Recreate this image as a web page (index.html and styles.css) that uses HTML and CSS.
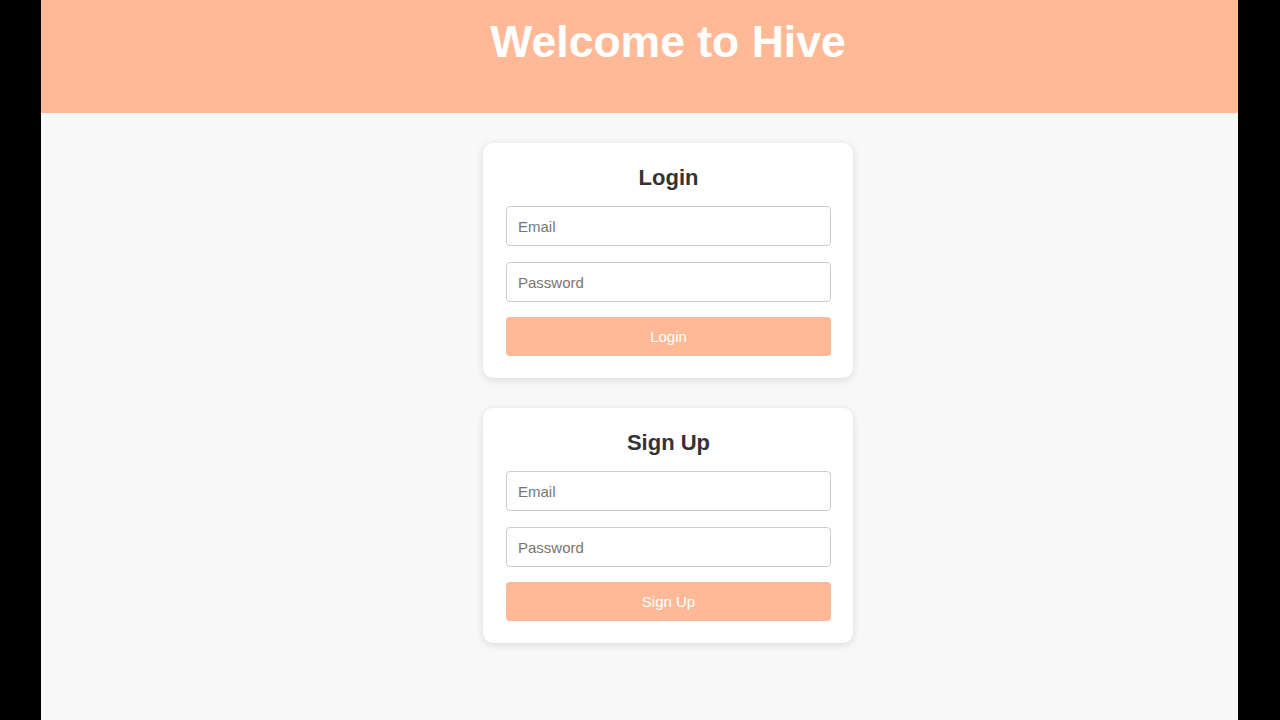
FILE: index.html
```html
<!DOCTYPE html>
<html lang="en">
<head>
<meta charset="utf-8">
<title>Hive</title>
<link rel="stylesheet" href="styles.css">
</head>
<body>
<div class="page">
  <header class="header">
    <h1 class="site-title">Welcome to Hive</h1>
  </header>
  <main class="main">
    <form class="card">
      <h2 class="card-title">Login</h2>
      <input class="field" type="email" placeholder="Email">
      <input class="field" type="password" placeholder="Password">
      <button class="btn" type="button">Login</button>
    </form>
    <form class="card">
      <h2 class="card-title">Sign Up</h2>
      <input class="field" type="email" placeholder="Email">
      <input class="field" type="password" placeholder="Password">
      <button class="btn" type="button">Sign Up</button>
    </form>
  </main>
</div>
</body>
</html>
```

FILE: styles.css
```css
* { box-sizing: border-box; }
html, body { margin: 0; padding: 0; height: 100%; }
body {
  background: #000;
  font-family: "Liberation Sans", Arial, Helvetica, sans-serif;
}
.page {
  width: 1197px;
  margin-left: 41px;
  height: 720px;
  background: #f8f8f8;
  display: flex;
  flex-direction: column;
}
.header {
  background: #ffb996;
  height: 113px;
  display: flex;
  justify-content: center;
  padding-top: 16px;
  padding-left: 57px;
}
.site-title {
  margin: 0;
  color: #fff;
  font-size: 44.5px;
  font-weight: bold;
  line-height: 52px;
  height: 52px;
}
.main {
  display: flex;
  flex-direction: column;
  align-items: center;
  gap: 30px;
  padding-top: 30px;
  padding-left: 57px;
}
.card {
  width: 370px;
  background: #fff;
  border-radius: 10px;
  box-shadow: 0 2px 8px rgba(0, 0, 0, 0.12);
  padding: 22px 22px 22px 23px;
  display: flex;
  flex-direction: column;
  margin: 0;
}
.card-title {
  margin: 0 0 15px;
  text-align: center;
  color: #333;
  font-size: 22px;
  font-weight: bold;
  line-height: 26px;
}
.field {
  display: block;
  width: 100%;
  height: 40px;
  border: 1px solid #ccc;
  border-radius: 4px;
  padding: 0 11px;
  font-family: inherit;
  font-size: 15px;
  color: #333;
  background: #fff;
  margin: 0 0 16px;
  outline: none;
}
.field + .field { margin-bottom: 15px; }
.field::placeholder { color: #767676; }
.btn {
  display: block;
  width: 100%;
  height: 39px;
  border: none;
  border-radius: 4px;
  background: #ffb996;
  color: #fff;
  font-family: inherit;
  font-size: 15px;
  cursor: pointer;
  padding: 0;
}
```
